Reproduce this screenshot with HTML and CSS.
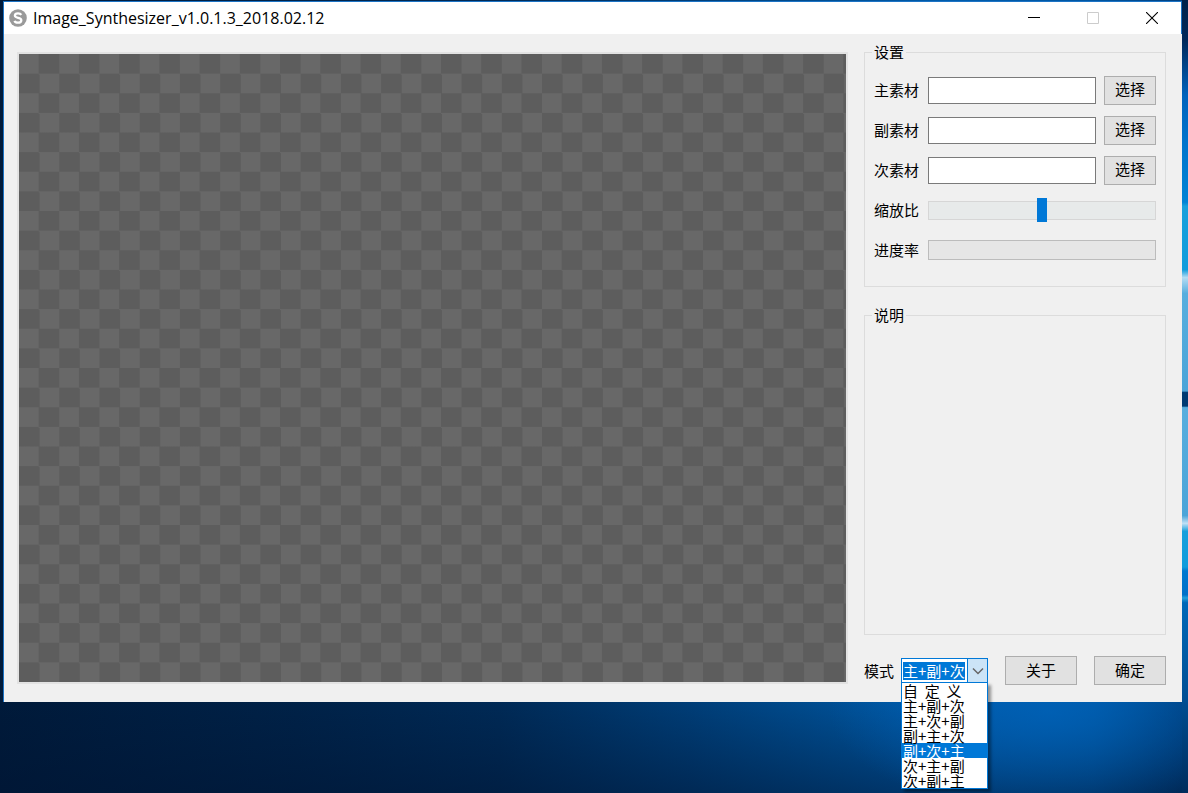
FILE: index.html
```html
<!DOCTYPE html>
<html lang="zh-CN">
<head>
  <meta charset="UTF-8">
  <title>Image_Synthesizer</title>
  <link rel="stylesheet" href="styles.css">
</head>
<body>

<div class="window">
  <header class="titlebar">
    <svg class="logo" viewBox="0 0 18 18" aria-hidden="true">
      <circle cx="9" cy="9" r="8.8" fill="#9a9a9a"></circle>
      <path d="M12.3 5.9C11.6 4.7 10.4 4.3 9 4.3C7.2 4.3 5.9 5.1 5.9 6.6C5.9 9.800 12.3 8 12.3 11.2C12.3 12.8 10.9 13.7 9 13.7C7.4 13.7 6 13.1 5.5 11.8" fill="none" stroke="#fff" stroke-width="2.3"></path>
    </svg>
    <h1 class="title">Image_Synthesizer_v1.0.1.3_2018.02.12</h1>
    <button class="win-btn" type="button" aria-label="最小化">
      <svg viewBox="0 0 12 12"><path d="M0 5.5h12" stroke="#000"></path></svg>
    </button>
    <button class="win-btn" type="button" aria-label="最大化" disabled>
      <svg viewBox="0 0 12 12"><path d="M.5.5h11v11H.5z" fill="none" stroke="#ccc"></path></svg>
    </button>
    <button class="win-btn" type="button" aria-label="关闭">
      <svg viewBox="0 0 12 12"><path d="M0 0L12 12M12 0L0 12" stroke="#000" stroke-width="1.1"></path></svg>
    </button>
  </header>

  <main class="content">
    <div class="preview"></div>

    <form class="side">
      <fieldset class="group settings">
        <legend>设置</legend>
        <div class="row">
          <label for="main-src">主素材</label>
          <input class="field" id="main-src" type="text">
          <button class="btn" type="button">选择</button>
        </div>
        <div class="row">
          <label for="second-src">副素材</label>
          <input class="field" id="second-src" type="text">
          <button class="btn" type="button">选择</button>
        </div>
        <div class="row">
          <label for="third-src">次素材</label>
          <input class="field" id="third-src" type="text">
          <button class="btn" type="button">选择</button>
        </div>
        <div class="row">
          <label for="scale">缩放比</label>
          <input class="slider" id="scale" type="range" min="0" max="100" value="50">
        </div>
        <div class="row">
          <label for="rate">进度率</label>
          <progress class="progress" id="rate" max="100" value="0"></progress>
        </div>
      </fieldset>

      <fieldset class="group notes">
        <legend>说明</legend>
      </fieldset>

      <div class="actions">
        <label class="mode-label" for="mode">模式</label>
        <div class="combo">
          <input class="combo-text" id="mode" type="text" value="主+副+次">
          <button class="combo-arrow" type="button" aria-label="展开">
            <svg viewBox="0 0 12 12"><path d="M1 3.5L6 8.5L11 3.5" fill="none" stroke="#666" stroke-width="1.5"></path></svg>
          </button>
          <select class="combo-list" size="7" aria-label="模式">
            <option>自&nbsp;&nbsp;定&nbsp;&nbsp;义</option>
            <option>主+副+次</option>
            <option>主+次+副</option>
            <option>副+主+次</option>
            <option class="hot">副+次+主</option>
            <option>次+主+副</option>
            <option>次+副+主</option>
          </select>
        </div>
        <button class="btn wide" type="button">关于</button>
        <button class="btn wide" type="button">确定</button>
      </div>
    </form>
  </main>
</div>

</body>
</html>
```

FILE: styles.css
```css
* {
  box-sizing: border-box;
}

/* desktop wallpaper: window light down the right edge, glow below */
body {
  display: flex;
  margin: 0;
  height: 100vh;
  padding: 1px 6px 91px 3px;
  color: #000;
  font: 15px/20px "Noto Sans CJK SC", sans-serif;
  background:
    linear-gradient(#00214a 0, #00285a 5%, #0062bc 12%, #0074cc 18%, #0083d5 25.5%, #18a0dc 26%, #109cdc 34%, #b4dcf4 35%, #58aede 37%, #4ba4d8 49.3%, #003a72 49.5%, #003a72 51.2%, #58aede 51.4%, #4ba4d8 65%, #c0e0f6 66%, #18a0dc 67%, #109cdc 71.5%, #0078d0 72%, #0070c8 75%, #20a0dc 75.4%, #0068b8 76%, #004f94 88%, #002c5c 100%) right top / 6px 100% no-repeat,
    radial-gradient(ellipse 220px 100px at 1050px 712px, rgba(0, 98, 184, 0.8), rgba(0, 86, 160, 0)),
    linear-gradient(rgba(0, 20, 50, 0) 700px, rgba(0, 20, 50, 0.5) 100%),
    linear-gradient(90deg, #001a3a 0, #002248 25%, #002a56 42%, #003e78 58%, #004f94 70%, #005cac 80%, #0056a2 92%, #003e7c 100%);
}

button, input, select {
  margin: 0;
  color: inherit;
  font: inherit;
}

.window {
  display: flex;
  flex: 1;
  flex-direction: column;
  border-top: 1px solid #1c73c4;
  border-left: 1px solid #1c73c4;
  background: #f0f0f0;
}

.titlebar {
  display: flex;
  align-items: center;
  height: 32px;
  padding-left: 5px;
  border-right: 1px solid #1c73c4;
  background: #fff;
}

.logo {
  width: 18px;
  height: 18px;
}

.title {
  flex: 1;
  margin: 0 0 0 6px;
  font: 400 16px/20px "Open Sans", "Noto Sans", sans-serif;
}

.win-btn {
  display: flex;
  align-items: center;
  justify-content: center;
  width: 59px;
  height: 30px;
  padding: 0;
  border: 0;
  background: none;
}

.win-btn svg {
  width: 12px;
  height: 12px;
}

.content {
  display: grid;
  flex: 1;
  grid-template-columns: 1fr 302px;
  gap: 16px;
  padding: 8px 16px 17px 13px;
}

/* 41 x 32 transparency squares */
.preview {
  margin: 10px 0 1px;
  border: 2px solid #e2e2e2;
  background: conic-gradient(#5d5d5d 25%, #686868 0 50%, #5d5d5d 0 75%, #686868 0) 0 0 / calc(100% * 2 / 41.1) calc(100% * 2 / 32);
  background-origin: padding-box;
}

.side {
  display: flex;
  flex-direction: column;
}

.group {
  min-width: 0;
  margin: 0;
  padding: 8px 9px 16px;
  border: 1px solid #dcdcdc;
}

.group legend {
  margin-left: -2px;
  padding: 0 2px;
}

.notes {
  flex: 1;
  margin-top: 18px;
}

.row {
  display: flex;
  align-items: center;
  height: 40px;
}

.row label {
  width: 54px;
}

.field {
  flex: 1;
  min-width: 0;
  height: 27px;
  margin-right: 8px;
  padding: 0 4px;
  border: 1px solid #7a7a7a;
  background: #fff;
}

.btn {
  width: 52px;
  height: 29px;
  padding: 0 0 2px;
  border: 1px solid #adadad;
  background: #e1e1e1;
}

.slider {
  flex: 1;
  min-width: 0;
  height: 24px;
  appearance: none;
  background: none;
}

.slider::-webkit-slider-runnable-track {
  height: 19px;
  border: 1px solid #d6d6d6;
  background: #e7eaea;
}

.slider::-webkit-slider-thumb {
  width: 10px;
  height: 24px;
  margin-top: -4px;
  appearance: none;
  background: #0078d7;
}

.progress {
  flex: 1;
  min-width: 0;
  height: 20px;
  appearance: none;
  border: 1px solid #bcbcbc;
  background: #e6e6e6;
}

.progress::-webkit-progress-bar {
  background: #e6e6e6;
}

.actions {
  display: flex;
  align-items: center;
  justify-content: space-between;
  margin-top: 21px;
}

.mode-label {
  margin-right: -10px;
}

.combo {
  display: flex;
  position: relative;
  align-items: center;
  width: 87px;
  height: 25px;
  padding-left: 1px;
  border: 1px solid #0078d7;
  background: #fff;
}

.combo-text {
  width: 62px;
  height: 18px;
  padding: 0;
  border: 0;
  background: #0078d7;
  color: #fff;
  line-height: 18px;
}

.combo-arrow {
  display: flex;
  align-items: center;
  justify-content: center;
  align-self: stretch;
  width: 20px;
  margin-left: auto;
  padding: 0;
  border: 0;
  border-left: 1px solid #0078d7;
  background: #cce4f7;
}

.combo-arrow svg {
  width: 12px;
  height: 12px;
}

.combo-list {
  position: absolute;
  top: 23px;
  left: -1px;
  width: 87px;
  height: 107px;
  padding: 0;
  overflow: hidden;
  border: 1px solid #0078d7;
  border-radius: 0;
  background: #fff;
  box-shadow: 3px 3px 3px rgba(0, 0, 0, 0.4);
}

.combo-list option {
  display: flex;
  align-items: center;
  height: 15px;
  min-height: 15px;
  padding: 0 1px;
}

.combo-list .hot {
  background: #0078d7;
  color: #fff;
}

.wide {
  width: 72px;
}
```
